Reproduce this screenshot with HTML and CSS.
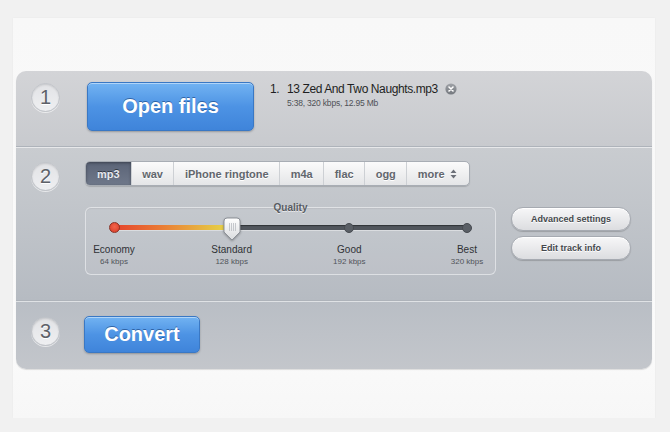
FILE: index.html
```html
<!DOCTYPE html>
<html lang="en">
<head>
  <meta charset="UTF-8">
  <title>Audio Converter</title>
  <link rel="stylesheet" href="styles.css">
</head>
<body>
  <div class="card">
    <div class="panel">

      <div class="step step-one">
        <div class="num">1</div>
        <div class="step-body row">
          <button class="big-btn open-btn">Open files</button>
          <div class="file">
            <div class="file-line">
              <span class="file-idx">1.</span>
              <span class="file-name">13 Zed And Two Naughts.mp3</span>
              <svg class="remove" width="12" height="12" viewBox="0 0 12 12">
                <defs>
                  <linearGradient id="rg" x1="0" y1="0" x2="0" y2="1">
                    <stop offset="0" stop-color="#a0a3a8"/>
                    <stop offset="1" stop-color="#74787e"/>
                  </linearGradient>
                </defs>
                <circle cx="6" cy="6" r="5.6" fill="url(#rg)"/>
                <path d="M4 4 L8 8 M8 4 L4 8" stroke="#fff" stroke-width="1.6" stroke-linecap="round"/>
              </svg>
            </div>
            <div class="file-meta">5:38, 320 kbps, 12.95 Mb</div>
          </div>
        </div>
      </div>

      <div class="step step-two">
        <div class="num">2</div>
        <div class="step-body col">
          <div class="formats">
            <span class="fmt active">mp3</span>
            <span class="fmt">wav</span>
            <span class="fmt">iPhone ringtone</span>
            <span class="fmt">m4a</span>
            <span class="fmt">flac</span>
            <span class="fmt">ogg</span>
            <span class="fmt more">more
              <svg width="7" height="10" viewBox="0 0 7 10">
                <path d="M3.5 0.5 L6.5 4 H0.5 Z M3.5 9.5 L6.5 6 H0.5 Z" fill="#6c7078"/>
              </svg>
            </span>
          </div>

          <div class="settings">
            <div class="quality">
              <div class="quality-title">Quality</div>
              <div class="track">
                <div class="track-fill"></div>
                <span class="stop stop-red" style="left: 0%"></span>
                <span class="stop" style="left: 66.67%"></span>
                <span class="stop" style="left: 100%"></span>
                <svg class="thumb" style="left: 33.33%" width="18" height="24" viewBox="0 0 18 24">
                  <defs>
                    <linearGradient id="tg" x1="0" y1="0" x2="0" y2="1">
                      <stop offset="0" stop-color="#ffffff"/>
                      <stop offset="1" stop-color="#d9dbde"/>
                    </linearGradient>
                  </defs>
                  <path d="M4 1 H14 A3 3 0 0 1 17 4 V15 L9 23 L1 15 V4 A3 3 0 0 1 4 1 Z" fill="url(#tg)" stroke="#8d9198"/>
                  <path d="M6.5 6 V14 M8.5 6 V14 M10.5 6 V14 M12.5 6 V14" stroke="#b9bcc1" stroke-width="0.8"/>
                </svg>
              </div>
              <div class="levels">
                <div class="level"><b>Economy</b><span>64 kbps</span></div>
                <div class="level"><b>Standard</b><span>128 kbps</span></div>
                <div class="level"><b>Good</b><span>192 kbps</span></div>
                <div class="level"><b>Best</b><span>320 kbps</span></div>
              </div>
            </div>
            <div class="side-btns">
              <button class="pill">Advanced settings</button>
              <button class="pill">Edit track info</button>
            </div>
          </div>
        </div>
      </div>

      <div class="step step-three">
        <div class="num">3</div>
        <div class="step-body row">
          <button class="big-btn convert-btn">Convert</button>
        </div>
      </div>

    </div>
  </div>
</body>
</html>
```

FILE: styles.css
```css
* {
  margin: 0;
  padding: 0;
  box-sizing: border-box;
  font-family: 'Liberation Sans', Arial, sans-serif;
}

body {
  background: #f1f1f1;
  padding: 18px 15px 0 13px;
}

.card {
  background: linear-gradient(#f8f8f8, #fbfbfb 80%, #f7f7f7);
  padding: 53px 3px 49px 3px;
  box-shadow: 0 0 2px rgba(0, 0, 0, 0.04);
}

.panel {
  border-radius: 10px;
  overflow: hidden;
  box-shadow: 0 1px 1px rgba(0, 0, 0, 0.12);
}

.step {
  display: flex;
  align-items: flex-start;
  padding-left: 15px;
}

.step + .step {
  border-top: 1px solid #aeb3ba;
  box-shadow: inset 0 1px 0 rgba(255, 255, 255, 0.55);
}

.step-one {
  height: 75px;
  padding-top: 11px;
  background: linear-gradient(#d3d4d7, #c8cace);
}

.step-two {
  height: 154px;
  padding-top: 14px;
  background: linear-gradient(#c9ccd0, #b6bbc2);
}

.step-three {
  height: 69px;
  padding-top: 15px;
  background: linear-gradient(#b9bec5, #c3c6cb);
}

.num {
  width: 29px;
  height: 29px;
  margin-top: 1px;
  margin-right: 25px;
  border-radius: 50%;
  background: linear-gradient(#e2e3e6, #eeeff1);
  border: 1px solid #c2c5ca;
  box-shadow: inset 0 1px 2px rgba(0, 0, 0, 0.12), 0 1px 0 rgba(255, 255, 255, 0.6);
  color: #5d6168;
  font-size: 20px;
  line-height: 27px;
  text-align: center;
  text-shadow: 0 1px 0 #fff;
}

.step-body.row {
  display: flex;
  align-items: flex-start;
}

.step-body.col {
  display: flex;
  flex-direction: column;
}

/* blue buttons */
.big-btn {
  border: 1px solid #3a78c4;
  border-radius: 5px;
  background: linear-gradient(#72b3f2, #4d93e4 50%, #3f84da);
  color: #fff;
  font-weight: bold;
  font-size: 20px;
  text-shadow: 0 -1px 0 rgba(20, 60, 120, 0.6);
  box-shadow: inset 0 1px 0 rgba(255, 255, 255, 0.45), 0 1px 2px rgba(0, 0, 0, 0.25);
  cursor: pointer;
}

.open-btn {
  width: 167px;
  height: 49px;
  margin-left: 2px;
}

.convert-btn {
  width: 116px;
  height: 37px;
  margin-left: -1px;
}

/* file list */
.file {
  margin-left: 16px;
}

.file-line {
  display: flex;
  align-items: center;
  height: 14px;
  color: #1e1f22;
  font-size: 12px;
  letter-spacing: -0.4px;
}

.file-idx {
  width: 17px;
}

.remove {
  margin-left: 7px;
}

.file-meta {
  margin-top: 2px;
  padding-left: 17px;
  font-size: 8.5px;
  letter-spacing: -0.2px;
  line-height: 11px;
  color: #4e5156;
}

/* format tabs */
.formats {
  display: flex;
  align-self: flex-start;
  height: 25px;
  border: 1px solid #a8adb4;
  border-radius: 5px;
  overflow: hidden;
  background: linear-gradient(#fbfbfb, #e4e5e7);
  box-shadow: 0 1px 1px rgba(0, 0, 0, 0.15);
}

.fmt {
  display: flex;
  align-items: center;
  gap: 5px;
  padding: 0 10.5px;
  font-size: 11px;
  font-weight: bold;
  color: #62666d;
  text-shadow: 0 1px 0 #fff;
  border-left: 1px solid #cdd0d4;
}

.fmt:first-child {
  border-left: none;
  padding: 0 11px;
}

.fmt.more {
  padding-right: 12px;
}

.fmt.active {
  background: linear-gradient(#5b6477, #6f788a);
  color: #e6e9ef;
  text-shadow: 0 -1px 0 rgba(0, 0, 0, 0.5);
  box-shadow: inset 0 1px 3px rgba(0, 0, 0, 0.35);
}

.settings {
  display: flex;
  align-items: flex-start;
  margin-top: 21px;
}

/* quality slider */
.quality {
  width: 411px;
  height: 68px;
  border: 1px solid rgba(235, 237, 240, 0.7);
  border-radius: 6px;
  background: rgba(255, 255, 255, 0.06);
  box-shadow: inset 0 1px 1px rgba(0, 0, 0, 0.05);
}

.quality-title {
  margin-top: -6px;
  text-align: center;
  font-size: 10px;
  font-weight: bold;
  line-height: 12px;
  color: #575b62;
  text-shadow: 0 1px 0 rgba(255, 255, 255, 0.6);
}

.track {
  position: relative;
  height: 5px;
  margin: 11px 28px 0 28px;
  border-radius: 3px;
  background: #51565d;
  box-shadow: inset 0 1px 1px rgba(0, 0, 0, 0.4), 0 1px 0 rgba(255, 255, 255, 0.4);
}

.track-fill {
  width: 33.33%;
  height: 100%;
  border-radius: 3px 0 0 3px;
  background: linear-gradient(90deg, #e5432d, #ea7b35 40%, #e6c444 85%, #e7d84c);
}

.stop {
  position: absolute;
  top: 50%;
  width: 10px;
  height: 10px;
  margin: -5px 0 0 -5px;
  border-radius: 50%;
  background: #5a5f66;
  border: 1px solid #464a50;
}

.stop-red {
  width: 11px;
  height: 11px;
  margin: -5.5px 0 0 -5.5px;
  background: radial-gradient(circle at 50% 40%, #f2654c, #d83a26);
  border-color: #8a3226;
}

.thumb {
  position: absolute;
  top: -8px;
  margin-left: -9px;
  filter: drop-shadow(0 1px 1px rgba(0, 0, 0, 0.3));
}

.levels {
  display: flex;
  justify-content: space-between;
  margin-top: 14px;
}

.level {
  width: 56px;
  display: flex;
  flex-direction: column;
  align-items: center;
}

.level b {
  font-weight: normal;
  font-size: 10px;
  line-height: 12px;
  color: #2f3236;
}

.level span {
  font-size: 8px;
  line-height: 11px;
  color: #50545a;
}

/* side buttons */
.side-btns {
  display: flex;
  flex-direction: column;
  gap: 5px;
  margin-left: 15px;
}

.pill {
  width: 120px;
  height: 24px;
  border: 1px solid #a6aab1;
  border-radius: 12px;
  background: linear-gradient(#f7f7f8, #dcdde0);
  box-shadow: inset 0 1px 0 #fff, 0 1px 1px rgba(0, 0, 0, 0.18);
  font-size: 9px;
  font-weight: bold;
  color: #45484d;
  text-shadow: 0 1px 0 #fff;
  cursor: pointer;
}
```
